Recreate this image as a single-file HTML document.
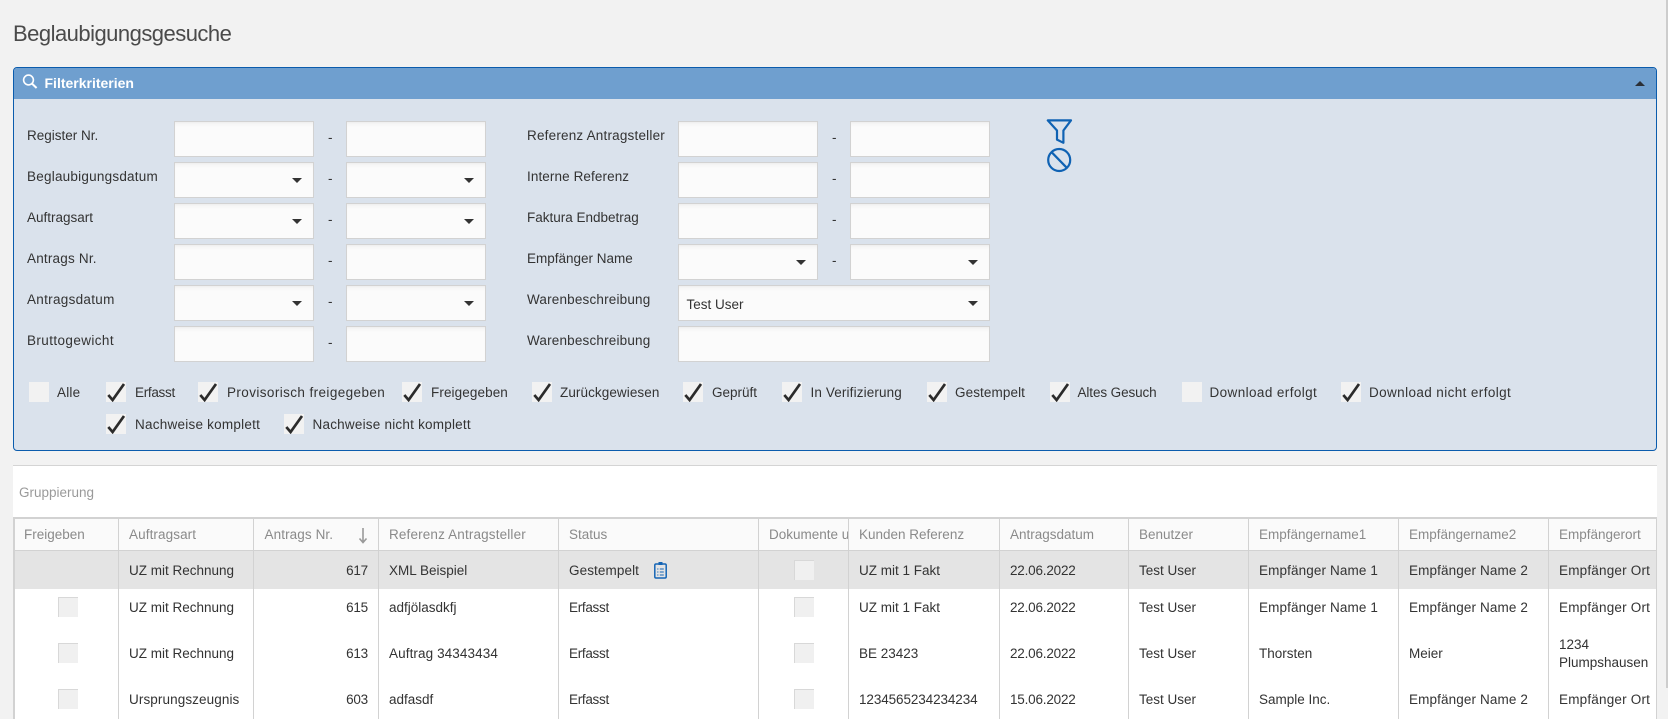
<!DOCTYPE html>
<html lang="de"><head><meta charset="utf-8"><title>Beglaubigungsgesuche</title>
<style>
html,body{margin:0;padding:0}
body{width:1668px;height:719px;background:#f2f2f2;overflow:hidden;position:relative;font-family:"Liberation Sans",sans-serif;font-size:13.5px;color:#333}
.a{position:absolute;white-space:nowrap}
.t{position:absolute;white-space:nowrap;line-height:20px;height:20px}
.i{position:absolute;width:138px;height:34px;background:#fbfbfb;border:1px solid #d2d2d2;box-shadow:inset 0 4px 4px -3px #eaeaea;box-sizing:content-box}
.w{width:310px}
.ar{position:absolute;width:0;height:0;border-left:5px solid transparent;border-right:5px solid transparent;border-top:5px solid #333}
.c{position:absolute;width:20px;height:20px;background:#f2f2f2}
.c svg{position:absolute;left:0;top:0}
.g{position:absolute;width:20px;height:20px;background:#f0f0f0;border-top:1px solid #d8d8d8;border-left:1px solid #d8d8d8;box-sizing:border-box}
.v{position:absolute;width:1.5px;background:#d2d2d2;top:518px;height:201px}
.h{color:#8a8a8a}
</style></head><body>
<div class="a" style="left:1666px;top:0;width:2px;height:688px;background:#cdcdcd"></div>
<div class="a" style="left:13px;top:21px;font-size:22px;line-height:26px;color:#4a4a4a;letter-spacing:-.52px">Beglaubigungsgesuche</div>

<div class="a" style="left:12.5px;top:67px;width:1644px;height:384px;background:#dae2ec;border:1px solid #0b5cad;border-radius:4px;box-sizing:border-box"></div>
<div class="a" style="left:13.5px;top:68px;width:1642px;height:31px;background:#6f9fcf;border-radius:3px 3px 0 0"></div>
<svg class="a" style="left:22px;top:74px" width="16" height="15" viewBox="0 0 16 15"><circle cx="6.5" cy="6" r="4.9" fill="none" stroke="#fff" stroke-width="1.6"/><path d="M10 9.6L14.6 14" stroke="#fff" stroke-width="2" fill="none"/></svg>
<div class="t" style="left:44.5px;top:73px;color:#fff;font-weight:bold;font-size:14px">Filterkriterien</div>
<div class="a" style="left:1635px;top:81px;width:0;height:0;border-left:5px solid transparent;border-right:5px solid transparent;border-bottom:5px solid #2b2f36"></div>

<!-- left labels -->
<div class="t" style="left:27px;top:126px">Register Nr.</div>
<div class="t" style="left:27px;top:167px;letter-spacing:.23px">Beglaubigungsdatum</div>
<div class="t" style="left:27px;top:208px">Auftragsart</div>
<div class="t" style="left:27px;top:249px;letter-spacing:.2px">Antrags Nr.</div>
<div class="t" style="left:27px;top:290px;letter-spacing:.3px">Antragsdatum</div>
<div class="t" style="left:27px;top:331px;letter-spacing:.4px">Bruttogewicht</div>

<!-- left inputs -->
<div class="i" style="left:174px;top:121px"></div><div class="t" style="left:328px;top:128px">-</div><div class="i" style="left:346px;top:121px"></div>
<div class="i" style="left:174px;top:162px"></div><div class="t" style="left:328px;top:169px">-</div><div class="i" style="left:346px;top:162px"></div>
<div class="i" style="left:174px;top:203px"></div><div class="t" style="left:328px;top:210px">-</div><div class="i" style="left:346px;top:203px"></div>
<div class="i" style="left:174px;top:244px"></div><div class="t" style="left:328px;top:251px">-</div><div class="i" style="left:346px;top:244px"></div>
<div class="i" style="left:174px;top:285px"></div><div class="t" style="left:328px;top:292px">-</div><div class="i" style="left:346px;top:285px"></div>
<div class="i" style="left:174px;top:326px"></div><div class="t" style="left:328px;top:333px">-</div><div class="i" style="left:346px;top:326px"></div>
<div class="ar" style="left:292px;top:178px"></div><div class="ar" style="left:464px;top:178px"></div>
<div class="ar" style="left:292px;top:219px"></div><div class="ar" style="left:464px;top:219px"></div>
<div class="ar" style="left:292px;top:301px"></div><div class="ar" style="left:464px;top:301px"></div>

<!-- right labels -->
<div class="t" style="left:527px;top:126px;letter-spacing:.2px">Referenz Antragsteller</div>
<div class="t" style="left:527px;top:167px;letter-spacing:.1px">Interne Referenz</div>
<div class="t" style="left:527px;top:208px">Faktura Endbetrag</div>
<div class="t" style="left:527px;top:249px">Empfänger Name</div>
<div class="t" style="left:527px;top:290px;letter-spacing:.18px">Warenbeschreibung</div>
<div class="t" style="left:527px;top:331px;letter-spacing:.18px">Warenbeschreibung</div>

<div class="i" style="left:678px;top:121px"></div><div class="t" style="left:832px;top:128px">-</div><div class="i" style="left:850px;top:121px"></div>
<div class="i" style="left:678px;top:162px"></div><div class="t" style="left:832px;top:169px">-</div><div class="i" style="left:850px;top:162px"></div>
<div class="i" style="left:678px;top:203px"></div><div class="t" style="left:832px;top:210px">-</div><div class="i" style="left:850px;top:203px"></div>
<div class="i" style="left:678px;top:244px"></div><div class="t" style="left:832px;top:251px">-</div><div class="i" style="left:850px;top:244px"></div>
<div class="ar" style="left:796px;top:260px"></div><div class="ar" style="left:968px;top:260px"></div>
<div class="i w" style="left:678px;top:285px"></div><div class="ar" style="left:968px;top:301px"></div>
<div class="t" style="left:686.5px;top:295px">Test User</div>
<div class="i w" style="left:678px;top:326px"></div>

<!-- funnel + clear -->
<svg class="a" style="left:1046px;top:118px" width="27" height="56" viewBox="0 0 27 56" fill="none" stroke="#0f62b3" stroke-width="2.2" stroke-linejoin="round">
<path d="M1.8 2.4H25L17.4 12.5V24.8L11 21.6V12.5Z"/>
<circle cx="13.2" cy="42" r="11"/><path d="M5.6 34.2L20.8 49.8"/></svg>

<!-- checkboxes -->
<svg width="0" height="0" style="position:absolute"><defs><symbol id="k" viewBox="0 0 20 20"><path d="M2.3 13L6.6 18L18 2" fill="none" stroke="#2b2b2b" stroke-width="2.7"/></symbol></defs></svg>
<div class="c" style="left:29px;top:382px"></div><div class="t" style="left:57px;top:383px;letter-spacing:.2px">Alle</div>
<div class="c" style="left:106px;top:382px"><svg width="20" height="20"><use href="#k"/></svg></div><div class="t" style="left:135px;top:383px;letter-spacing:-.3px">Erfasst</div>
<div class="c" style="left:198px;top:382px"><svg width="20" height="20"><use href="#k"/></svg></div><div class="t" style="left:227px;top:383px;letter-spacing:.4px">Provisorisch freigegeben</div>
<div class="c" style="left:402px;top:382px"><svg width="20" height="20"><use href="#k"/></svg></div><div class="t" style="left:431px;top:383px;letter-spacing:.1px">Freigegeben</div>
<div class="c" style="left:532px;top:382px"><svg width="20" height="20"><use href="#k"/></svg></div><div class="t" style="left:560px;top:383px;letter-spacing:.08px">Zurückgewiesen</div>
<div class="c" style="left:683px;top:382px"><svg width="20" height="20"><use href="#k"/></svg></div><div class="t" style="left:712px;top:383px">Geprüft</div>
<div class="c" style="left:782px;top:382px"><svg width="20" height="20"><use href="#k"/></svg></div><div class="t" style="left:810.5px;top:383px;letter-spacing:.13px">In Verifizierung</div>
<div class="c" style="left:927px;top:382px"><svg width="20" height="20"><use href="#k"/></svg></div><div class="t" style="left:955px;top:383px;letter-spacing:.1px">Gestempelt</div>
<div class="c" style="left:1050px;top:382px"><svg width="20" height="20"><use href="#k"/></svg></div><div class="t" style="left:1077.5px;top:383px;letter-spacing:-.1px">Altes Gesuch</div>
<div class="c" style="left:1182px;top:382px"></div><div class="t" style="left:1209.5px;top:383px;letter-spacing:.4px">Download erfolgt</div>
<div class="c" style="left:1341px;top:382px"><svg width="20" height="20"><use href="#k"/></svg></div><div class="t" style="left:1369px;top:383px;letter-spacing:.39px">Download nicht erfolgt</div>
<div class="c" style="left:106px;top:414px"><svg width="20" height="20"><use href="#k"/></svg></div><div class="t" style="left:135px;top:415px;letter-spacing:.24px">Nachweise komplett</div>
<div class="c" style="left:284px;top:414px"><svg width="20" height="20"><use href="#k"/></svg></div><div class="t" style="left:312.5px;top:415px;letter-spacing:.22px">Nachweise nicht komplett</div>

<!-- grid -->
<div class="a" style="left:13px;top:465px;width:1644px;height:254px;background:#fff;border-top:1px solid #d4d4d4;box-sizing:border-box"></div>
<div class="t" style="left:19px;top:483px;color:#9a9a9a">Gruppierung</div>
<div class="a" style="left:13px;top:517px;width:1644px;height:34px;background:#fafafa;border-top:2px solid #d2d2d2;border-bottom:1px solid #d2d2d2;box-sizing:border-box"></div>
<div class="a" style="left:14px;top:551px;width:1642px;height:38px;background:#e4e4e4"></div>

<div class="v" style="left:13px"></div><div class="v" style="left:117.5px"></div><div class="v" style="left:252.5px"></div><div class="v" style="left:377.5px"></div><div class="v" style="left:557.5px"></div><div class="v" style="left:757.5px"></div><div class="v" style="left:847.5px"></div><div class="v" style="left:998.5px"></div><div class="v" style="left:1127.5px"></div><div class="v" style="left:1247.5px"></div><div class="v" style="left:1397.5px"></div><div class="v" style="left:1547.5px"></div><div class="v" style="left:1655.5px"></div>

<!-- header -->
<div class="t h" style="left:24px;top:525px">Freigeben</div>
<div class="t h" style="left:129px;top:525px;letter-spacing:.1px">Auftragsart</div>
<div class="t h" style="left:264.5px;top:525px;letter-spacing:.1px">Antrags Nr.</div>
<svg class="a" style="left:357px;top:527px" width="12" height="17" viewBox="0 0 12 17"><path d="M6 1V15M2.5 11.5L6 15.5L9.5 11.5" fill="none" stroke="#9a9a9a" stroke-width="1.6"/></svg>
<div class="t h" style="left:389px;top:525px;letter-spacing:.15px">Referenz Antragsteller</div>
<div class="t h" style="left:569px;top:525px">Status</div>
<div class="a h" style="left:769px;top:525px;width:78.5px;overflow:hidden;line-height:20px">Dokumente und</div>
<div class="t h" style="left:859px;top:525px">Kunden Referenz</div>
<div class="t h" style="left:1010px;top:525px">Antragsdatum</div>
<div class="t h" style="left:1139px;top:525px">Benutzer</div>
<div class="t h" style="left:1259px;top:525px">Empfängername1</div>
<div class="t h" style="left:1409px;top:525px">Empfängername2</div>
<div class="t h" style="left:1559px;top:525px">Empfängerort</div>

<!-- row 1 -->
<div class="t" style="left:129px;top:561px">UZ mit Rechnung</div>
<div class="t" style="left:253px;top:561px;width:115px;text-align:right;letter-spacing:-.2px">617</div>
<div class="t" style="left:389px;top:561px">XML Beispiel</div>
<div class="t" style="left:569px;top:561px;letter-spacing:.1px">Gestempelt</div>
<svg class="a" style="left:653px;top:561px" width="15" height="18" viewBox="0 0 15 18" fill="none" stroke="#1565b5" stroke-width="1.5"><rect x="1.8" y="3" width="11.4" height="14" rx="1.2"/><rect x="5.5" y="1" width="4" height="3" fill="#1565b5" stroke="none"/><path d="M4.2 8H5.4M6.8 8H10.8M4.2 11H5.4M6.8 11H10.8M4.2 14H5.4M6.8 14H10.8" stroke-width="1.1"/></svg>
<div class="g" style="left:794px;top:560px"></div>
<div class="t" style="left:859px;top:561px">UZ mit 1 Fakt</div>
<div class="t" style="left:1010px;top:561px;letter-spacing:-.2px">22.06.2022</div>
<div class="t" style="left:1139px;top:561px">Test User</div>
<div class="t" style="left:1259px;top:561px;letter-spacing:.12px">Empfänger Name 1</div>
<div class="t" style="left:1409px;top:561px;letter-spacing:.12px">Empfänger Name 2</div>
<div class="t" style="left:1559px;top:561px;letter-spacing:.2px">Empfänger Ort</div>

<!-- row 2 -->
<div class="g" style="left:58px;top:597px"></div>
<div class="t" style="left:129px;top:598px">UZ mit Rechnung</div>
<div class="t" style="left:253px;top:598px;width:115px;text-align:right;letter-spacing:-.2px">615</div>
<div class="t" style="left:389px;top:598px">adfjölasdkfj</div>
<div class="t" style="left:569px;top:598px;letter-spacing:-.3px">Erfasst</div>
<div class="g" style="left:794px;top:597px"></div>
<div class="t" style="left:859px;top:598px">UZ mit 1 Fakt</div>
<div class="t" style="left:1010px;top:598px;letter-spacing:-.2px">22.06.2022</div>
<div class="t" style="left:1139px;top:598px">Test User</div>
<div class="t" style="left:1259px;top:598px;letter-spacing:.12px">Empfänger Name 1</div>
<div class="t" style="left:1409px;top:598px;letter-spacing:.12px">Empfänger Name 2</div>
<div class="t" style="left:1559px;top:598px;letter-spacing:.2px">Empfänger Ort</div>

<!-- row 3 -->
<div class="g" style="left:58px;top:643px"></div>
<div class="t" style="left:129px;top:644px">UZ mit Rechnung</div>
<div class="t" style="left:253px;top:644px;width:115px;text-align:right;letter-spacing:-.2px">613</div>
<div class="t" style="left:389px;top:644px;letter-spacing:.1px">Auftrag 34343434</div>
<div class="t" style="left:569px;top:644px;letter-spacing:-.3px">Erfasst</div>
<div class="g" style="left:794px;top:643px"></div>
<div class="t" style="left:859px;top:644px">BE 23423</div>
<div class="t" style="left:1010px;top:644px;letter-spacing:-.2px">22.06.2022</div>
<div class="t" style="left:1139px;top:644px">Test User</div>
<div class="t" style="left:1259px;top:644px">Thorsten</div>
<div class="t" style="left:1409px;top:644px">Meier</div>
<div class="t" style="left:1559px;top:635px">1234</div>
<div class="t" style="left:1559px;top:653px">Plumpshausen</div>

<!-- row 4 -->
<div class="g" style="left:58px;top:689px"></div>
<div class="t" style="left:129px;top:690px;letter-spacing:.1px">Ursprungszeugnis</div>
<div class="t" style="left:253px;top:690px;width:115px;text-align:right;letter-spacing:-.2px">603</div>
<div class="t" style="left:389px;top:690px">adfasdf</div>
<div class="t" style="left:569px;top:690px;letter-spacing:-.3px">Erfasst</div>
<div class="g" style="left:794px;top:689px"></div>
<div class="t" style="left:859px;top:690px;letter-spacing:-.1px">1234565234234234</div>
<div class="t" style="left:1010px;top:690px;letter-spacing:-.2px">15.06.2022</div>
<div class="t" style="left:1139px;top:690px">Test User</div>
<div class="t" style="left:1259px;top:690px">Sample Inc.</div>
<div class="t" style="left:1409px;top:690px;letter-spacing:.12px">Empfänger Name 2</div>
<div class="t" style="left:1559px;top:690px;letter-spacing:.2px">Empfänger Ort</div>
</body></html>
